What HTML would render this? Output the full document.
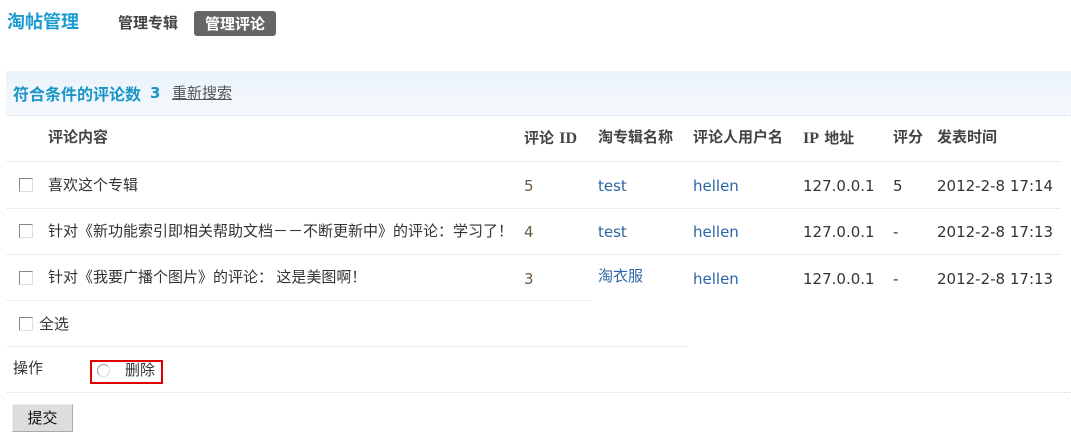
<!DOCTYPE html>
<html><head><meta charset="utf-8"><style>
body{margin:0;width:1071px;height:436px;background:#fff;font-family:"DejaVu Sans","Noto Sans CJK SC",sans-serif;font-size:15px;color:#333;position:relative;overflow:hidden}
.a{position:absolute;white-space:nowrap;line-height:20px}
.ln{position:absolute;height:0;border-top:1px dotted #c9e0ef}
.cb{position:absolute;border:1px solid #888;border-right-color:#ddd;border-bottom-color:#ddd;background:#fff;box-sizing:border-box;width:14px;height:14px}
.h{font-weight:bold;color:#444}
.n{color:#6a5a40}
.lk{color:#2a66a8}
.c{font-family:"Noto Sans CJK SC",sans-serif}
</style></head><body>
<div class="a c" style="left:7px;top:11px;font-size:18px;font-weight:bold;color:#1a9bd0">淘帖管理</div>
<div class="a c" style="left:118px;top:13px;font-weight:bold;color:#444">管理专辑</div>
<div class="a c" style="left:194px;top:11px;width:82px;height:25px;background:#666;border-radius:3px;color:#fff;font-weight:bold;line-height:25px;text-align:center">管理评论</div>

<div style="position:absolute;left:6px;top:71px;width:1065px;height:44px;background:linear-gradient(#eaf3fb,#f5f9fd)"></div>
<div class="ln" style="left:6px;top:115px;width:1065px"></div>
<div class="a c" style="left:13px;top:83px;font-weight:bold;color:#1a95c8;font-size:16px">符合条件的评论数</div>
<div class="a" style="left:150px;top:83px;font-weight:bold;color:#1a95c8">3</div>
<div class="a c" style="left:172px;top:83px;color:#555;text-decoration:underline">重新搜索</div>

<div class="a h c" style="left:48px;top:127px">评论内容</div>
<div class="a h" style="left:524px;top:128px"><span class="c">评论</span> <span style="font-family:'Liberation Serif',serif;font-size:16px">ID</span></div>
<div class="a h c" style="left:598px;top:127px">淘专辑名称</div>
<div class="a h c" style="left:693px;top:127px">评论人用户名</div>
<div class="a h" style="left:803px;top:128px"><span style="font-family:'Liberation Serif',serif;font-size:16px">IP</span> <span class="c">地址</span></div>
<div class="a h c" style="left:893px;top:127px">评分</div>
<div class="a h c" style="left:937px;top:127px">发表时间</div>
<div class="ln" style="left:7px;top:161px;width:1054px"></div>

<div class="cb" style="left:19px;top:178px"></div>
<div class="a c" style="left:48px;top:175px">喜欢这个专辑</div>
<div class="a n" style="left:524px;top:176px">5</div>
<div class="a lk" style="left:598px;top:176px">test</div>
<div class="a lk" style="left:693px;top:176px">hellen</div>
<div class="a" style="left:803px;top:176px">127.0.0.1</div>
<div class="a" style="left:893px;top:176px">5</div>
<div class="a" style="left:937px;top:176px">2012-2-8 17:14</div>
<div class="ln" style="left:7px;top:208px;width:1054px"></div>

<div class="cb" style="left:19px;top:224px"></div>
<div class="a c" style="left:48px;top:221px">针对《新功能索引即相关帮助文档－－不断更新中》的评论：学习了！</div>
<div class="a n" style="left:524px;top:222px">4</div>
<div class="a lk" style="left:598px;top:222px">test</div>
<div class="a lk" style="left:693px;top:222px">hellen</div>
<div class="a" style="left:803px;top:222px">127.0.0.1</div>
<div class="a" style="left:893px;top:222px">-</div>
<div class="a" style="left:937px;top:222px">2012-2-8 17:13</div>
<div class="ln" style="left:7px;top:254px;width:1054px"></div>

<div class="cb" style="left:19px;top:271px"></div>
<div class="a c" style="left:48px;top:267px">针对《我要广播个图片》的评论： 这是美图啊！</div>
<div class="a n" style="left:524px;top:269px">3</div>
<div class="a lk c" style="left:598px;top:266px">淘衣服</div>
<div class="a lk" style="left:693px;top:269px">hellen</div>
<div class="a" style="left:803px;top:269px">127.0.0.1</div>
<div class="a" style="left:893px;top:269px">-</div>
<div class="a" style="left:937px;top:269px">2012-2-8 17:13</div>
<div class="ln" style="left:7px;top:300px;width:585px"></div>

<div class="cb" style="left:19px;top:317px"></div>
<div class="a c" style="left:39px;top:314px">全选</div>
<div class="ln" style="left:7px;top:346px;width:681px"></div>

<div class="a c" style="left:13px;top:358px">操作</div>
<div style="position:absolute;left:90px;top:360px;width:69px;height:20px;border:2px solid #e00000"></div>
<div style="position:absolute;left:97px;top:364px;width:11px;height:11px;border-radius:50%;border:1px solid #999;border-right-color:#ddd;border-bottom-color:#ddd"></div>
<div class="a c" style="left:125px;top:360px">删除</div>
<div class="ln" style="left:7px;top:392px;width:1064px"></div>

<div class="c" style="position:absolute;left:12px;top:404px;width:61px;height:28px;box-sizing:border-box;background:#ddd;border:1px solid #aaa;border-top-color:#eee;border-left-color:#eee;text-align:center;line-height:26px;color:#111">提交</div>
</body></html>
